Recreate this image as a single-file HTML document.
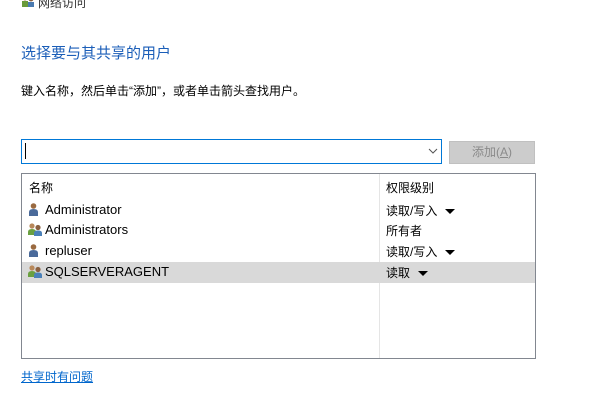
<!DOCTYPE html>
<html><head><meta charset="utf-8"><style>
*{margin:0;padding:0;box-sizing:border-box}
body{width:604px;height:405px;background:#fff;position:relative;overflow:hidden;font-family:"Liberation Sans","Noto Sans CJK SC",sans-serif;font-size:12px;color:#000}
.a{position:absolute;white-space:nowrap}
.tri{display:inline-block;width:0;height:0;border-left:5px solid transparent;border-right:5px solid transparent;border-top:5px solid #000;vertical-align:middle;margin-left:8px}
</style></head><body>
<svg class="a" style="left:21px;top:-5px" width="14" height="12" viewBox="0 0 14 12"><circle cx="4" cy="3" r="2.5" fill="#b07a50"/><rect x="1" y="6" width="6" height="6" fill="#6a9a3a"/><circle cx="10" cy="4" r="2.5" fill="#8a6040"/><rect x="7" y="7" width="6" height="5" fill="#4a7ab0"/></svg>
<div class="a" style="left:38px;top:-6px;font-size:12px;color:#333">网络访问</div>
<div class="a" style="left:21px;top:42px;font-size:15px;color:#1b5eb8">选择要与其共享的用户</div>
<div class="a" style="left:21px;top:82px;font-size:12px">键入名称，然后单击“添加”，或者单击箭头查找用户。</div>
<div class="a" style="left:21px;top:139px;width:421px;height:25px;border:1px solid #0078d7"></div>
<div class="a" style="left:25px;top:143px;width:1px;height:16px;background:#000"></div>
<svg class="a" style="left:428px;top:148px" width="10" height="6"><path d="M1 1L5 5L9 1" fill="none" stroke="#555" stroke-width="1"/></svg>
<div class="a" style="left:449px;top:141px;width:86px;height:23px;background:#cccccc;border:1px solid #c0c0c0;color:#8a8a8a;text-align:center;line-height:21px">添加(<u>A</u>)</div>
<div class="a" style="left:21px;top:173px;width:515px;height:186px;border:1px solid #828790"></div>
<div class="a" style="left:379px;top:174px;width:1px;height:184px;background:#e5e5e5"></div>
<div class="a" style="left:22px;top:262px;width:513px;height:21px;background:#d9d9d9"></div>
<div class="a" style="left:29px;top:179px">名称</div>
<div class="a" style="left:386px;top:179px">权限级别</div>

<svg class="a" style="left:29px;top:203px" width="9" height="13" viewBox="0 0 9 13"><circle cx="4.5" cy="3" r="2.8" fill="#9a6a40"/><path d="M0 13V9Q0 6 4.5 6Q9 6 9 9V13Z" fill="#4a6a9a"/></svg>
<div class="a" style="left:45px;top:202px;font-size:13px">Administrator</div>
<div class="a" style="left:386px;top:202px">读取/写入<span class="tri"></span></div>

<svg class="a" style="left:28px;top:223px" width="15" height="13" viewBox="0 0 15 13"><circle cx="4" cy="3" r="2.6" fill="#b8885a"/><path d="M0 12V9Q0 6 4 6Q8 6 8 9V12Z" fill="#6aa040"/><circle cx="10" cy="4.5" r="2.6" fill="#8a6040"/><path d="M6 13V10Q6 7.5 10 7.5Q14 7.5 14 10V13Z" fill="#4a80b8"/></svg>
<div class="a" style="left:45px;top:222px;font-size:13px">Administrators</div>
<div class="a" style="left:386px;top:222px">所有者</div>

<svg class="a" style="left:29px;top:244px" width="9" height="13" viewBox="0 0 9 13"><circle cx="4.5" cy="3" r="2.8" fill="#9a6a40"/><path d="M0 13V9Q0 6 4.5 6Q9 6 9 9V13Z" fill="#4a6a9a"/></svg>
<div class="a" style="left:45px;top:243px;font-size:13px">repluser</div>
<div class="a" style="left:386px;top:243px">读取/写入<span class="tri"></span></div>

<svg class="a" style="left:28px;top:265px" width="15" height="13" viewBox="0 0 15 13"><circle cx="4" cy="3" r="2.6" fill="#b8885a"/><path d="M0 12V9Q0 6 4 6Q8 6 8 9V12Z" fill="#6aa040"/><circle cx="10" cy="4.5" r="2.6" fill="#8a6040"/><path d="M6 13V10Q6 7.5 10 7.5Q14 7.5 14 10V13Z" fill="#4a80b8"/></svg>
<div class="a" style="left:45px;top:264px;font-size:13px">SQLSERVERAGENT</div>
<div class="a" style="left:386px;top:264px">读取<span class="tri"></span></div>

<div class="a" style="left:21px;top:368px;color:#0066cc;text-decoration:underline">共享时有问题</div>
</body></html>
